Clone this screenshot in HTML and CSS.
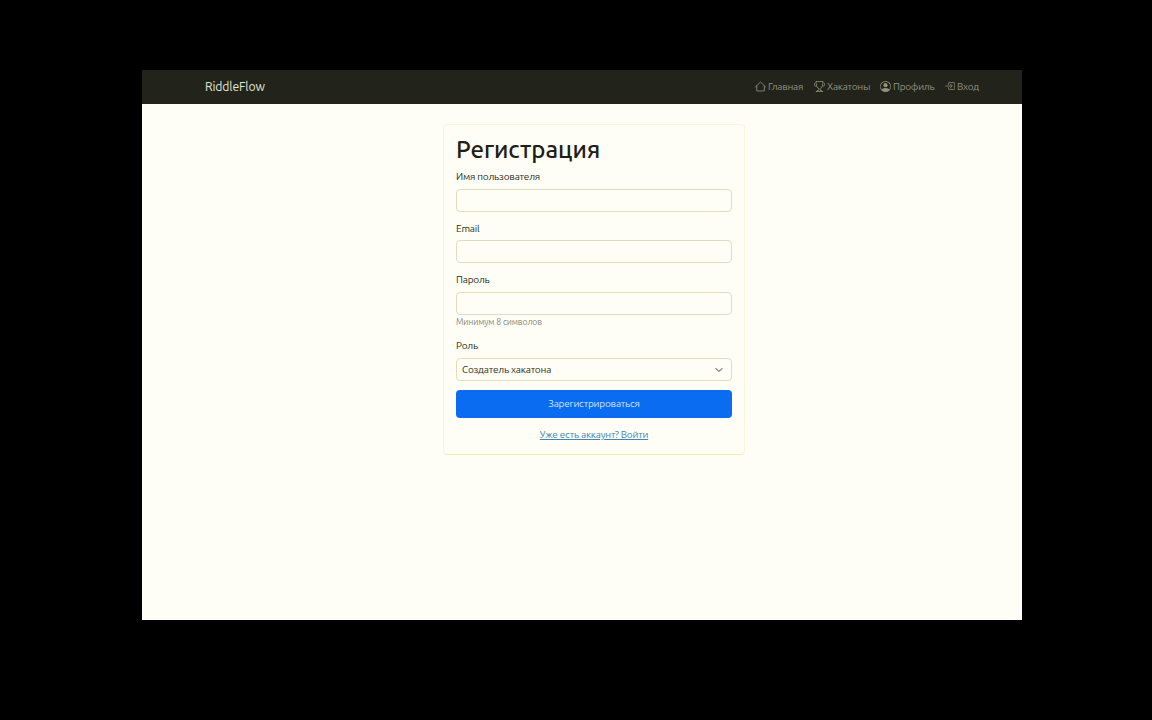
FILE: index.html
```html
<!DOCTYPE html>
<html lang="ru">
<head>
<meta charset="utf-8">
<title>RiddleFlow</title>
<link rel="stylesheet" href="styles.css">
</head>
<body>
<div class="screen">
  <header class="navbar">
    <a class="brand">RiddleFlow</a>
    <nav class="links">
      <a class="link home"><svg class="icon outline" viewBox="0 0 16 16"><path d="M.8 8.500 8 1.500l7.200 7M2.500 7.200v7.300h11V7.200"/></svg><span>Главная</span></a>
      <a class="link events"><svg class="icon" viewBox="0 0 16 16"><path d="M2.5.5A.5.5 0 0 1 3 0h10a.5.5 0 0 1 .5.5q0 .807-.034 1.536a3 3 0 1 1-1.133 5.89c-.79 1.865-1.878 2.777-2.833 3.011v2.173l1.425.356c.194.048.377.135.537.255L13.3 15.1a.5.5 0 0 1-.3.9H3a.5.5 0 0 1-.3-.9l1.838-1.379c.16-.12.343-.207.537-.255L6.5 13.11v-2.173c-.955-.234-2.043-1.146-2.833-3.012a3 3 0 1 1-1.132-5.89A33 33 0 0 1 2.5.5m.099 2.54a2 2 0 0 0 .72 3.935c-.333-1.05-.588-2.346-.72-3.935m10.083 3.935a2 2 0 0 0 .72-3.935c-.133 1.59-.388 2.885-.72 3.935M3.504 1q.01.775.056 1.469c.13 2.028.457 3.546.87 4.667C5.294 9.48 6.484 10 7 10a.5.5 0 0 1 .5.5v2.61a1 1 0 0 1-.757.97l-1.426.356a.5.5 0 0 0-.179.085L4.5 15h7l-.638-.479a.5.5 0 0 0-.18-.085l-1.425-.356a1 1 0 0 1-.757-.97V10.5A.5.5 0 0 1 9 10c.516 0 1.706-.52 2.57-2.864.413-1.12.74-2.64.87-4.667q.045-.694.056-1.469z"/></svg><span>Хакатоны</span></a>
      <a class="link profile"><svg class="icon" viewBox="0 0 16 16"><path d="M11 6a3 3 0 1 1-6 0 3 3 0 0 1 6 0"/><path fill-rule="evenodd" d="M0 8a8 8 0 1 1 16 0A8 8 0 0 1 0 8m8-7a7 7 0 0 0-5.468 11.37C3.242 11.226 4.805 10 8 10s4.757 1.225 5.468 2.37A7 7 0 0 0 8 1"/></svg><span>Профиль</span></a>
      <a class="link login"><svg class="icon outline" viewBox="0 0 16 16"><path d="M5.500 5.500v-2a1 1 0 0 1 1-1h8a1 1 0 0 1 1 1v9a1 1 0 0 1-1 1h-8a1 1 0 0 1-1-1v-2M.8 8h10.500M8.300 4.800 11.500 8l-3.200 3.200"/></svg><span>Вход</span></a>
    </nav>
  </header>
  <main class="card">
    <h1 class="title">Регистрация</h1>
    <label class="label">Имя пользователя</label>
    <div class="field"></div>
    <label class="label">Email</label>
    <div class="field"></div>
    <label class="label">Пароль</label>
    <div class="field password"></div>
    <div class="hint">Минимум 8 символов</div>
    <label class="label">Роль</label>
    <div class="field select"><span>Создатель хакатона</span><svg class="chevron" viewBox="0 0 16 16"><path d="m2 5 6 6 6-6"/></svg></div>
    <div class="button">Зарегистрироваться</div>
    <div class="footer"><a class="signin">Уже есть аккаунт? Войти</a></div>
  </main>
</div>
</body>
</html>
```
FILE: styles.css
```css
* { box-sizing: border-box; }
body {
  margin: 0;
  width: 1152px;
  height: 720px;
  padding: 70px 130px 100px 142px;
  overflow: hidden;
  background: #000;
  font: 10px/15px Ubuntu, "Noto Sans", sans-serif;
  letter-spacing: -0.2px;
  color: #2b2d20;
}
.screen { width: 880px; height: 550px; background: #fefef6; }
.navbar {
  height: 34px;
  padding: 0 43px 2px 63px;
  display: flex;
  align-items: center;
  justify-content: space-between;
  background: #22231a;
}
.brand { font-size: 12.2px; letter-spacing: -0.12px; color: #e3e6d5; }
.links { display: flex; gap: 10px; color: #91937f; }
.link { display: flex; align-items: center; gap: 2px; white-space: nowrap; letter-spacing: -0.25px; }
.home { width: 49px; }
.events { width: 56px; }
.profile { width: 55px; }
.login { width: 34px; }
.icon { width: 11px; height: 11px; flex: none; fill: currentColor; }
.login .icon { width: 10px; height: 10px; }
.outline { fill: none; stroke: currentColor; stroke-width: 1.2; stroke-linecap: round; stroke-linejoin: round; }
.card {
  width: 302px;
  height: 331px;
  margin: 20px 0 0 301px;
  padding: 10px 12px 0;
  border: 1px solid #f7f7d8;
  border-bottom-color: #eeeeb4;
  border-radius: 4px;
}
.title {
  margin: 0 0 5px;
  height: 29px;
  font-size: 24px;
  line-height: 29px;
  font-weight: 500;
  letter-spacing: 0;
  color: #1d2015;
  white-space: nowrap;
}
.label { display: block; height: 15px; margin-bottom: 4.6px; white-space: nowrap; }
.field {
  height: 23px;
  border: 1px solid #dedfbd;
  border-radius: 4px;
  margin-bottom: 9.1px;
}
.password { margin-bottom: 0; }
.hint { height: 14px; margin: 0 0 9.500px; font-size: 8.600px; line-height: 14px; letter-spacing: -0.12px; color: #85887a; }
.select { display: flex; align-items: center; justify-content: space-between; padding: 0 8px 0 5px; }
.chevron { width: 8px; height: 8px; fill: none; stroke: #343a30; stroke-width: 2; stroke-linecap: round; stroke-linejoin: round; }
.button {
  height: 28px;
  border-radius: 4px;
  background: #0a6cf0;
  color: #d5e5ee;
  line-height: 28px;
  text-align: center;
}
.footer { margin-top: 9px; text-align: center; }
.signin { color: #3c85b4; text-decoration: underline; }
```
